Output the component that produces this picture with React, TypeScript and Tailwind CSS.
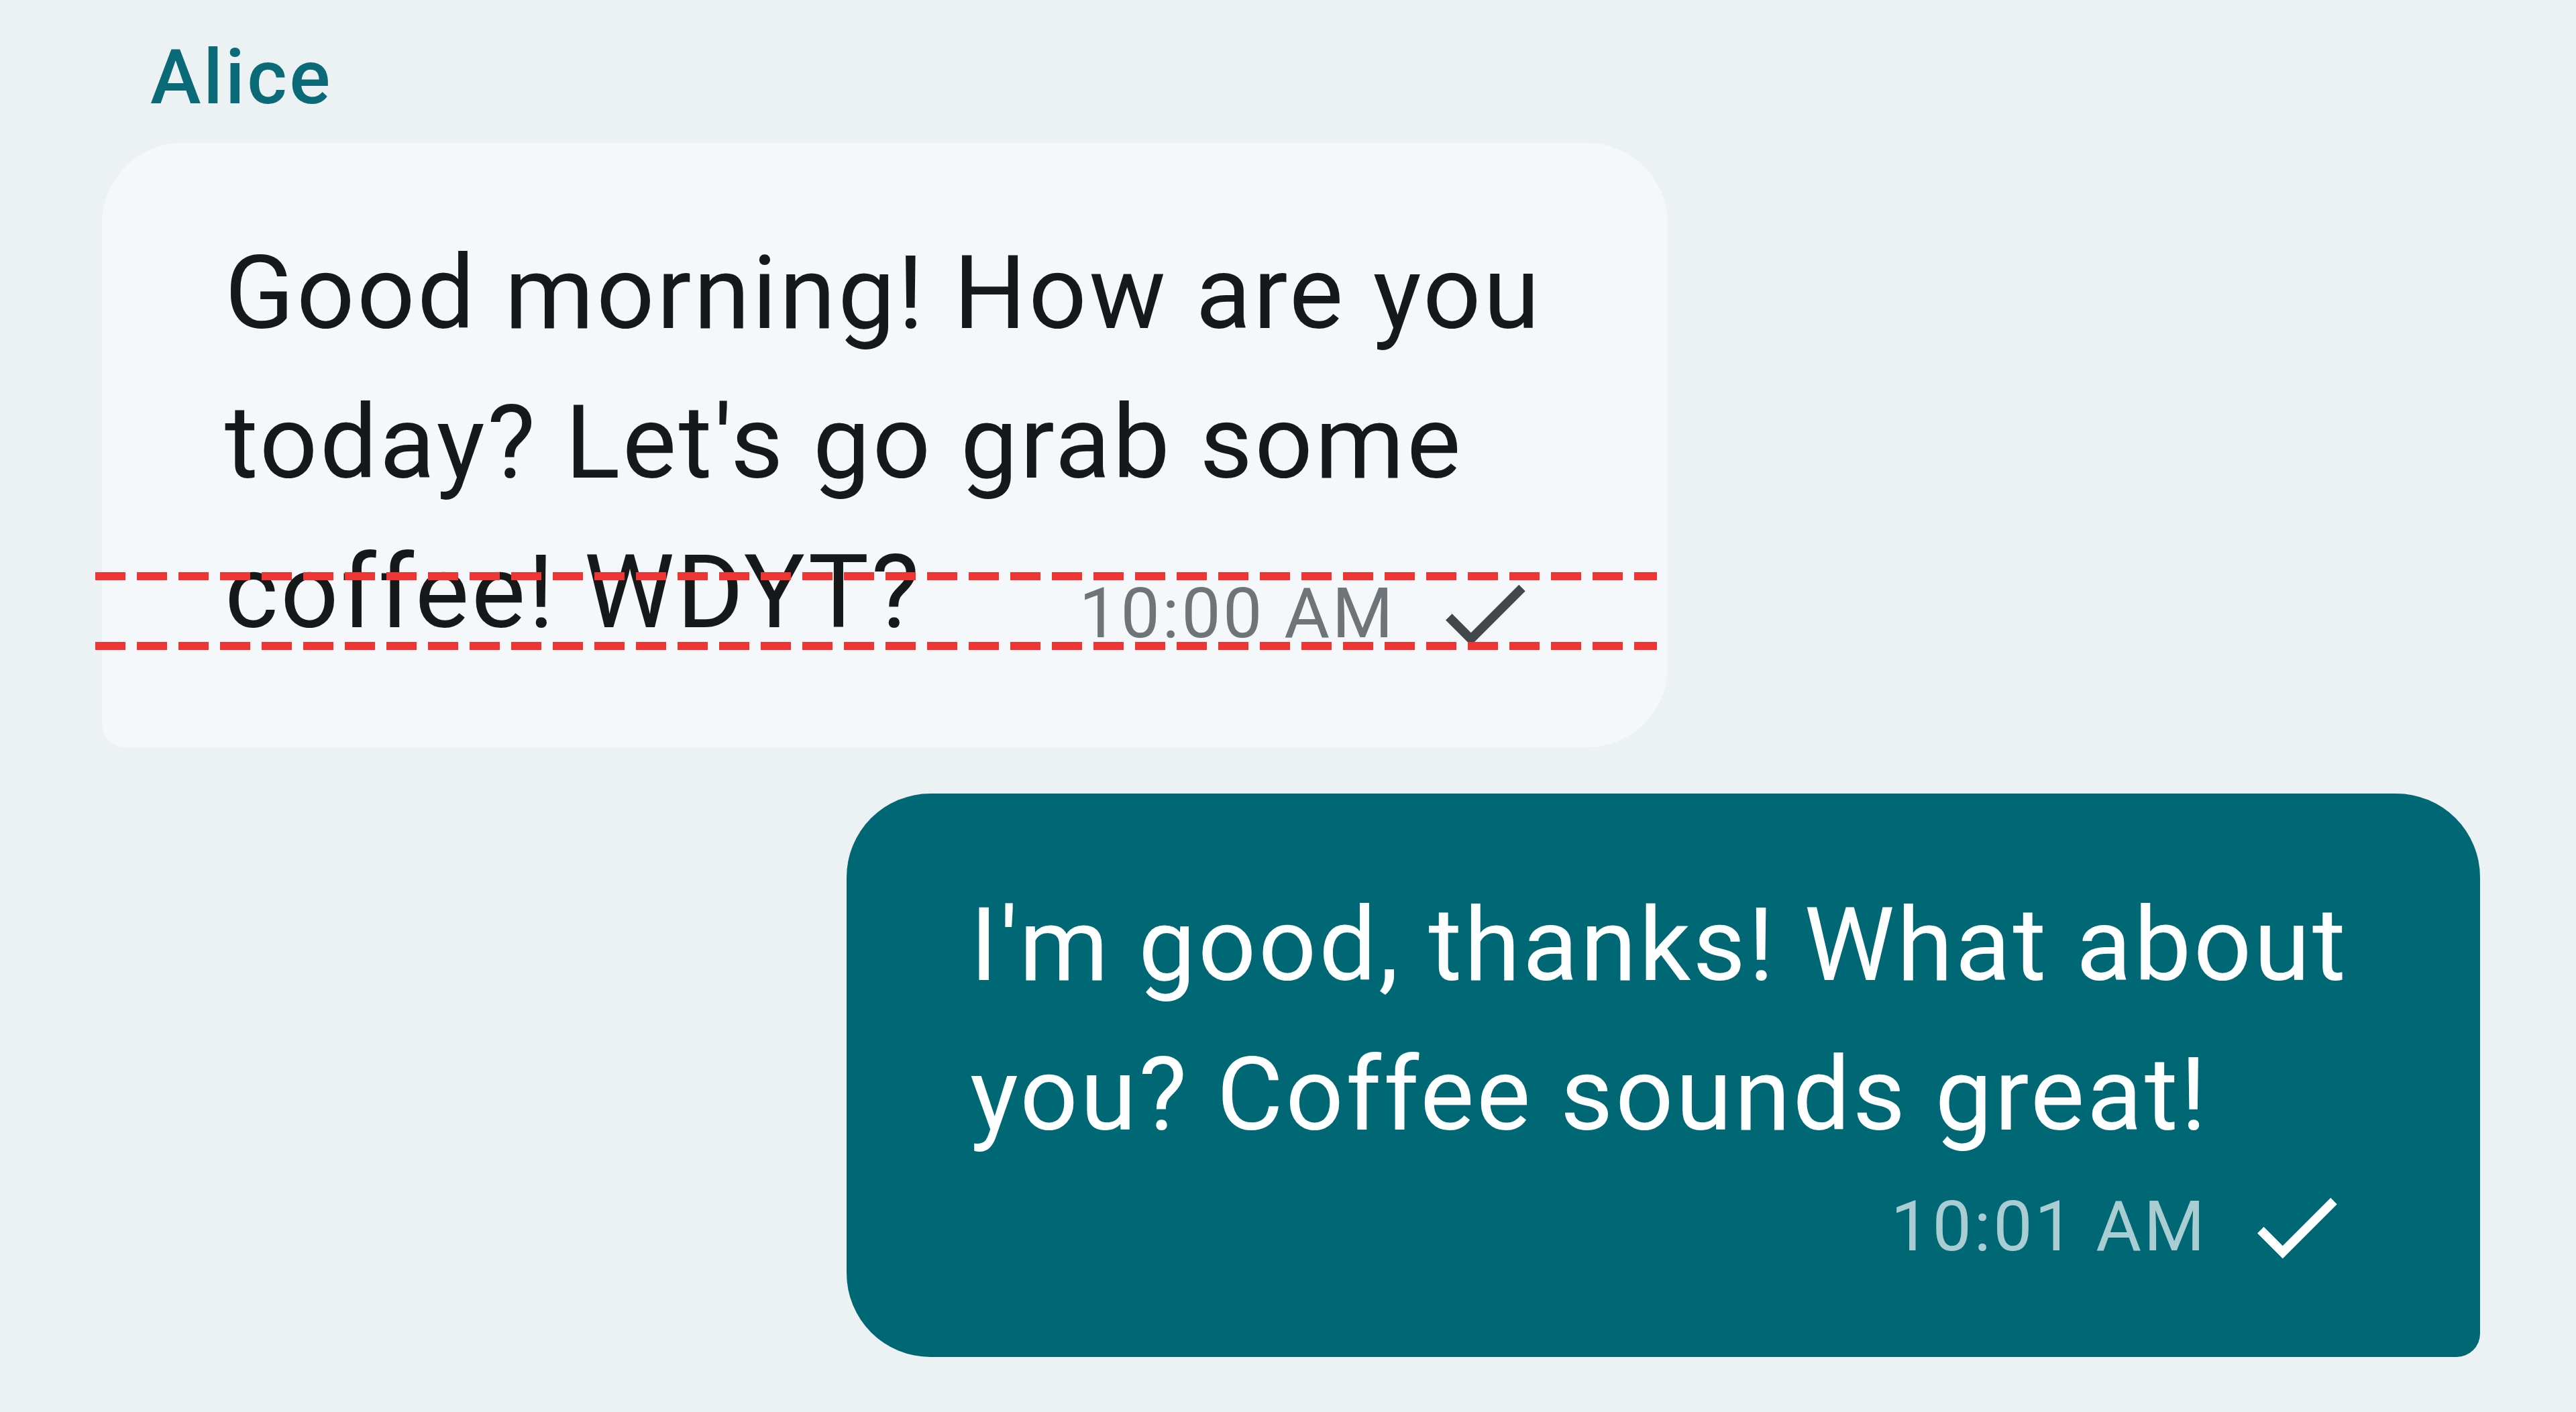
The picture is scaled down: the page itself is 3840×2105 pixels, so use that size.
import React from 'react';

function CheckIcon({ className }: { className?: string }) {
  return (
    <svg viewBox="0 0 24 24" className={className} aria-hidden="true">
      <path d="M9 16.17L4.83 12l-1.42 1.41L9 19 21 7l-1.41-1.41z" />
    </svg>
  );
}

function DashedGuide({ className }: { className: string }) {
  return (
    <div
      className={`pointer-events-none absolute left-[142px] h-[12px] w-[2328px] bg-[repeating-linear-gradient(90deg,#ef3434_0px,#ef3434_45px,transparent_45px,transparent_62px)] ${className}`}
    />
  );
}

export default function App() {
  return (
    <div className="relative flex min-h-screen w-full flex-col items-start bg-[#ecf1f4] font-['Roboto',sans-serif] antialiased">
      <p className="ml-[224px] pt-[35px] text-[114px] font-medium leading-[160px] tracking-[3.5px] text-[#0b6a77]">
        Alice
      </p>

      {/* incoming */}
      <div className="ml-[152px] mt-[18px] w-[2334px] rounded-[120px] rounded-bl-[35px] bg-[#f4f8fa] pb-[118px] pl-[183px] pr-[192px] pt-[113px]">
        <p className="whitespace-nowrap text-[152px] leading-[223px] tracking-[3.4px] text-[#16181a]">
          Good morning! How are you
          <br />
          today? Let's go grab some
          <br />
          coffee! WDYT?
        </p>
        <div className="-mt-[161px] flex h-[162px] items-center justify-end gap-[52px]">
          <span className="text-[104px] leading-[122px] tracking-[3.5px] text-[#6f7479]">10:00 AM</span>
          <CheckIcon className="size-[162px] fill-[#41474b]" />
        </div>
      </div>

      {/* outgoing */}
      <div className="ml-[1262px] mt-[69px] w-[2435px] rounded-[125px] rounded-br-[35px] bg-[#006874] pb-[113px] pl-[184px] pr-[193px] pt-[115px]">
        <p className="whitespace-nowrap text-[152px] leading-[223px] tracking-[3.4px] text-white">
          I'm good, thanks! What about
          <br />
          you? Coffee sounds great!
        </p>
        <div className="mt-[4px] flex h-[162px] items-center justify-end gap-[52px]">
          <span className="text-[104px] leading-[122px] tracking-[3.5px] text-[#a9cdd2]">10:01 AM</span>
          <CheckIcon className="size-[162px] fill-white" />
        </div>
      </div>

      <DashedGuide className="top-[853px]" />
      <DashedGuide className="top-[957px]" />
    </div>
  );
}
